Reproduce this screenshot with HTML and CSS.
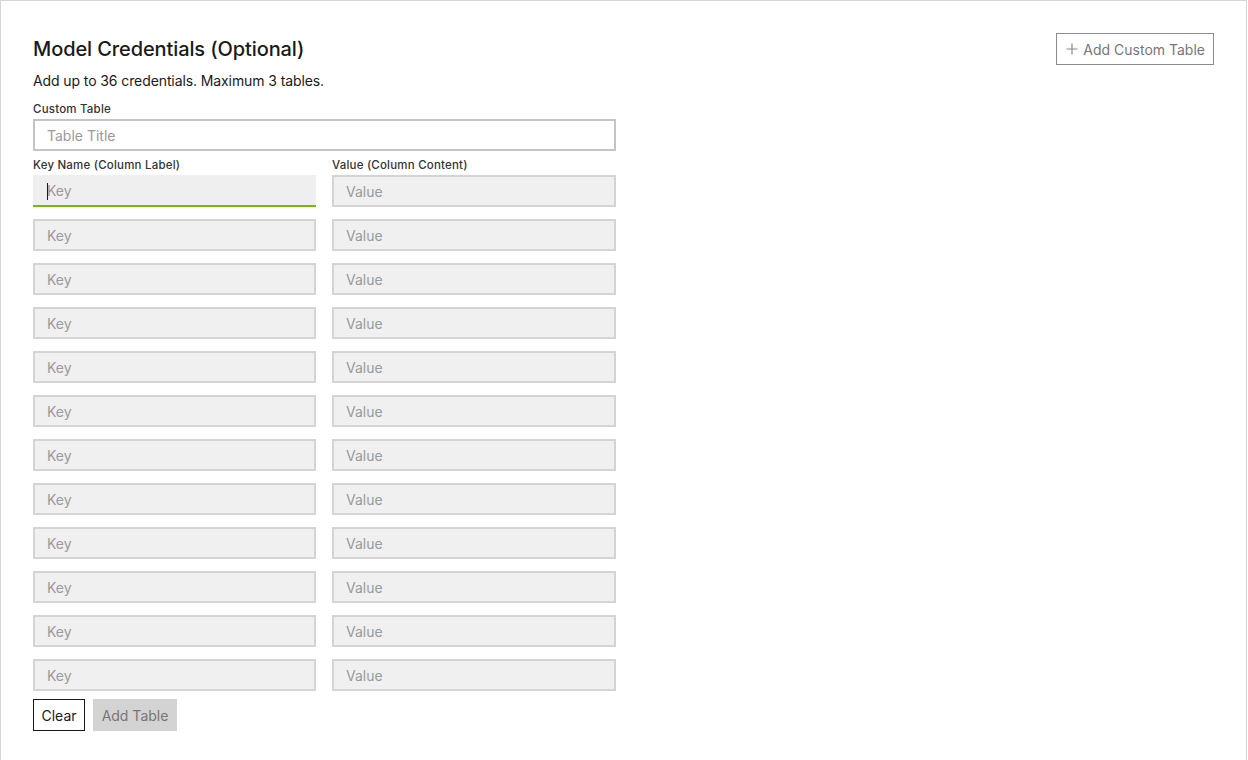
FILE: index.html
```html
<!DOCTYPE html>
<html>
<head>
<meta charset="utf-8">
<link rel="stylesheet" href="styles.css">
</head>
<body>
<div class="card">
  <div class="header">
    <div class="intro">
      <h2 class="title">Model Credentials (Optional)</h2>
      <p class="subtitle">Add up to 36 credentials. Maximum 3 tables.</p>
    </div>
    <button class="btn-outline" type="button">
      <svg class="plus" width="12" height="12" viewBox="0 0 12 12"><path d="M6 0.5V11.5M0.5 6H11.5" stroke="#8a8a8a" stroke-width="1.2" fill="none"/></svg>
      <span>Add Custom Table</span>
    </button>
  </div>
  <div class="form">
    <label class="label">Custom Table</label>
    <input class="input title-input" type="text" placeholder="Table Title">
    <div class="grid">
      <label class="label">Key Name (Column Label)</label>
      <label class="label">Value (Column Content)</label>
      <div class="field focused"><input class="input gray" type="text" placeholder="Key"></div>
      <div class="field"><input class="input gray" type="text" placeholder="Value"></div>
      <div class="field"><input class="input gray" type="text" placeholder="Key"></div>
      <div class="field"><input class="input gray" type="text" placeholder="Value"></div>
      <div class="field"><input class="input gray" type="text" placeholder="Key"></div>
      <div class="field"><input class="input gray" type="text" placeholder="Value"></div>
      <div class="field"><input class="input gray" type="text" placeholder="Key"></div>
      <div class="field"><input class="input gray" type="text" placeholder="Value"></div>
      <div class="field"><input class="input gray" type="text" placeholder="Key"></div>
      <div class="field"><input class="input gray" type="text" placeholder="Value"></div>
      <div class="field"><input class="input gray" type="text" placeholder="Key"></div>
      <div class="field"><input class="input gray" type="text" placeholder="Value"></div>
      <div class="field"><input class="input gray" type="text" placeholder="Key"></div>
      <div class="field"><input class="input gray" type="text" placeholder="Value"></div>
      <div class="field"><input class="input gray" type="text" placeholder="Key"></div>
      <div class="field"><input class="input gray" type="text" placeholder="Value"></div>
      <div class="field"><input class="input gray" type="text" placeholder="Key"></div>
      <div class="field"><input class="input gray" type="text" placeholder="Value"></div>
      <div class="field"><input class="input gray" type="text" placeholder="Key"></div>
      <div class="field"><input class="input gray" type="text" placeholder="Value"></div>
      <div class="field"><input class="input gray" type="text" placeholder="Key"></div>
      <div class="field"><input class="input gray" type="text" placeholder="Value"></div>
      <div class="field"><input class="input gray" type="text" placeholder="Key"></div>
      <div class="field"><input class="input gray" type="text" placeholder="Value"></div>
    </div>
    <div class="actions">
      <button class="btn-clear" type="button">Clear</button>
      <button class="btn-disabled" type="button">Add Table</button>
    </div>
  </div>
</div>
</body>
</html>
```
FILE: styles.css
```css
* { box-sizing: border-box; }
html, body { margin: 0; padding: 0; background: #ffffff; }
body {
  font-family: Inter, "Noto Sans", "Liberation Sans", sans-serif;
  color: #1a1a1a;
  height: 760px;
  overflow: hidden;
}
.card {
  width: 1247px;
  height: 760px;
  border: 1px solid #d6d6d6;
  border-bottom: none;
  padding: 32px;
}
.header {
  display: flex;
  justify-content: space-between;
  align-items: flex-start;
}
.title {
  margin: 0;
  font-size: 20px;
  line-height: 32px;
  font-weight: 500;
  color: #1a1a1a;
  letter-spacing: -0.1px;
}
.subtitle {
  margin: 6px 0 0;
  font-size: 14px;
  line-height: 20px;
  color: #1a1a1a;
  letter-spacing: -0.1px;
}
.btn-outline {
  display: flex;
  align-items: center;
  gap: 5px;
  height: 32px;
  padding: 0 8px 0 9px;
  background: #fff;
  border: 1px solid #8c8c8c;
  border-radius: 0;
  font-family: inherit;
  font-size: 14px;
  color: #767676;
}
.form {
  width: 583px;
  margin-top: 11px;
  display: flex;
  flex-direction: column;
}
.label {
  display: block;
  font-size: 11.5px;
  line-height: 14px;
  font-weight: 500;
  letter-spacing: 0.2px;
  color: #333333;
  margin-bottom: 3px;
}
.input {
  display: block;
  width: 100%;
  height: 32px;
  padding: 0 12px;
  font-family: inherit;
  font-size: 14px;
  color: #1a1a1a;
  border-radius: 0;
  outline: none;
}
.input::placeholder { color: #9a9a9a; opacity: 1; }
.title-input {
  background: #fff;
  border: 2px solid #c4c4c4;
  margin-bottom: 7px;
}
.grid {
  display: grid;
  grid-template-columns: 283px 284px;
  column-gap: 16px;
  row-gap: 12px;
}
.grid .label { margin-bottom: -9px; }
.gray {
  background: #f0f0f0;
  border: 2px solid #d4d4d4;
}
.field { position: relative; }
.field.focused .input {
  background: #efefef;
  border: none;
  border-bottom: 2px solid #76b900;
  padding-left: 14px;
}
.field.focused::before {
  content: "";
  position: absolute;
  left: 14px;
  top: 8px;
  width: 1px;
  height: 17px;
  background: #1a1a1a;
}
.actions {
  display: flex;
  gap: 8px;
  margin-top: 8px;
}
.btn-clear {
  width: 52px;
  height: 32px;
  padding: 0;
  background: #fff;
  border: 1px solid #1a1a1a;
  border-radius: 0;
  font-family: inherit;
  font-size: 14px;
  color: #1a1a1a;
}
.btn-disabled {
  width: 84px;
  height: 32px;
  padding: 0;
  background: #d3d3d3;
  border: none;
  border-radius: 0;
  font-family: inherit;
  font-size: 14px;
  color: #767676;
}
```
